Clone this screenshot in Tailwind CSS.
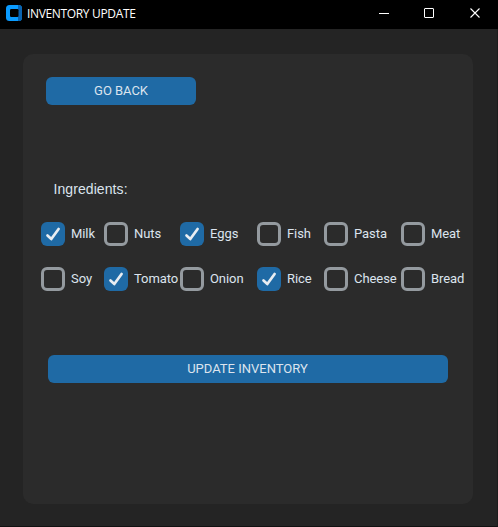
<!DOCTYPE html>
<html lang="en">
<head>
<meta charset="utf-8">
<title>INVENTORY UPDATE</title>
<script src="https://cdn.jsdelivr.net/npm/@tailwindcss/browser@4"></script>
</head>
<body class="w-[498px] h-[527px] overflow-hidden bg-[#242424] font-['Roboto',sans-serif] text-[13px] text-[#dce4ee]">
<svg class="hidden">
  <symbol id="check" viewBox="0 0 24 24"><path d="M6.500 13.500 10.300 17 17.600 7" fill="none" stroke="#e8edf2" stroke-width="2.700" stroke-linecap="round" stroke-linejoin="round"/></symbol>
</svg>
<div class="flex flex-col w-[498px] h-[527px] border-b border-r border-b-[#111] border-r-[#1c1c1c]">
  <header class="flex items-center h-[29px] w-[498px] shrink-0 bg-black pl-[6px]">
    <svg class="w-4 h-4 -mt-[3px]" viewBox="0 0 16 16">
      <rect width="16" height="16" rx="3.5" fill="#0a9bff"/>
      <path d="M12 0h.5A3.500 3.500 0 0 1 16 3.500v9a3.500 3.500 0 0 1-3.500 3.500H12z" fill="#0a63b0"/>
      <rect x="4" y="4" width="8.500" height="8" rx="1.200" fill="#000"/>
    </svg>
    <h1 class="ml-[5px] -mt-[2px] w-[109px] whitespace-nowrap font-['Open_Sans',sans-serif] text-[12px] tracking-[-0.34px] text-white">INVENTORY UPDATE</h1>
    <svg class="ml-auto mr-[14px] -mt-[3px] w-[108px] h-4" viewBox="0 0 108 16" fill="none" stroke="#fff">
      <path d="M3 8.500h10"/>
      <rect x="48.500" y="3.500" width="9" height="9" rx=".5"/>
      <path d="M94.500 3.500l9 9M103.500 3.500l-9 9" stroke-width="1.100"/>
    </svg>
  </header>
  <main class="flex flex-col items-start w-[450px] h-[450px] ml-[23px] mt-[25px] rounded-[10px] bg-[#2b2b2b] pt-[23px]">
    <button class="ml-[23px] w-[150px] h-7 rounded-[6px] bg-[#1f6aa5] tracking-[-0.05px]">GO BACK</button>
    <p class="ml-[30.5px] mt-[74px] h-5 leading-5 font-['Liberation_Sans',sans-serif] text-[14px] tracking-[0.08px]">Ingredients:</p>
    <div class="ml-[18px] mt-[23px] grid grid-cols-[63px_76px_77px_67px_77px_70px] gap-y-[21px] whitespace-nowrap tracking-[-0.07px]">
      <div class="flex items-center gap-[6px]"><span class="size-6 shrink-0 rounded-[6px] bg-[#1f6aa5]"><svg class="size-6"><use href="#check"/></svg></span>Milk</div>
      <div class="flex items-center gap-[6px]"><span class="size-6 shrink-0 rounded-[6px] border-3 border-[#949a9f]"></span>Nuts</div>
      <div class="flex items-center gap-[6px]"><span class="size-6 shrink-0 rounded-[6px] bg-[#1f6aa5]"><svg class="size-6"><use href="#check"/></svg></span>Eggs</div>
      <div class="flex items-center gap-[6px]"><span class="size-6 shrink-0 rounded-[6px] border-3 border-[#949a9f]"></span>Fish</div>
      <div class="flex items-center gap-[6px]"><span class="size-6 shrink-0 rounded-[6px] border-3 border-[#949a9f]"></span>Pasta</div>
      <div class="flex items-center gap-[6px]"><span class="size-6 shrink-0 rounded-[6px] border-3 border-[#949a9f]"></span>Meat</div>
      <div class="flex items-center gap-[6px]"><span class="size-6 shrink-0 rounded-[6px] border-3 border-[#949a9f]"></span>Soy</div>
      <div class="flex items-center gap-[6px]"><span class="size-6 shrink-0 rounded-[6px] bg-[#1f6aa5]"><svg class="size-6"><use href="#check"/></svg></span>Tomato</div>
      <div class="flex items-center gap-[6px]"><span class="size-6 shrink-0 rounded-[6px] border-3 border-[#949a9f]"></span>Onion</div>
      <div class="flex items-center gap-[6px]"><span class="size-6 shrink-0 rounded-[6px] bg-[#1f6aa5]"><svg class="size-6"><use href="#check"/></svg></span>Rice</div>
      <div class="flex items-center gap-[6px]"><span class="size-6 shrink-0 rounded-[6px] border-3 border-[#949a9f]"></span>Cheese</div>
      <div class="flex items-center gap-[6px]"><span class="size-6 shrink-0 rounded-[6px] border-3 border-[#949a9f]"></span>Bread</div>
    </div>
    <button class="ml-[25px] mt-[64px] w-[400px] h-7 rounded-[6px] bg-[#1f6aa5] pr-px">UPDATE INVENTORY</button>
  </main>
</div>
</body>
</html>
